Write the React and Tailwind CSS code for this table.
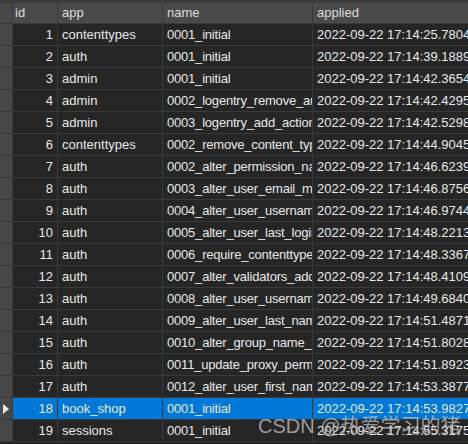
import React from "react";

const rows = [
  [1, "contenttypes", "0001_initial", "2022-09-22 17:14:25.780460"],
  [2, "auth", "0001_initial", "2022-09-22 17:14:39.188962"],
  [3, "admin", "0001_initial", "2022-09-22 17:14:42.365421"],
  [4, "admin", "0002_logentry_remove_auto_add", "2022-09-22 17:14:42.429510"],
  [5, "admin", "0003_logentry_add_action_flag_choices", "2022-09-22 17:14:42.529832"],
  [6, "contenttypes", "0002_remove_content_type_name", "2022-09-22 17:14:44.904512"],
  [7, "auth", "0002_alter_permission_name_max_length", "2022-09-22 17:14:46.623910"],
  [8, "auth", "0003_alter_user_email_max_length", "2022-09-22 17:14:46.875632"],
  [9, "auth", "0004_alter_user_username_opts", "2022-09-22 17:14:46.974411"],
  [10, "auth", "0005_alter_user_last_login_null", "2022-09-22 17:14:48.221309"],
  [11, "auth", "0006_require_contenttypes_0002", "2022-09-22 17:14:48.336721"],
  [12, "auth", "0007_alter_validators_add_error_messages", "2022-09-22 17:14:48.410987"],
  [13, "auth", "0008_alter_user_username_max_length", "2022-09-22 17:14:49.684022"],
  [14, "auth", "0009_alter_user_last_name_max_length", "2022-09-22 17:14:51.487133"],
  [15, "auth", "0010_alter_group_name_max_length", "2022-09-22 17:14:51.802854"],
  [16, "auth", "0011_update_proxy_permissions", "2022-09-22 17:14:51.892376"],
  [17, "auth", "0012_alter_user_first_name_max_length", "2022-09-22 17:14:53.387765"],
  [18, "book_shop", "0001_initial", "2022-09-22 17:14:53.982734"],
  [19, "sessions", "0001_initial", "2022-09-22 17:14:55.317598"],
];

const Row = ({ r }) => {
  const sel = r[0] === 18;
  const bg = sel ? "bg-[#0078d7]" : "bg-[#262626]";
  return (
    <div className="flex h-[22px] border-b border-[#3a3a3a]">
      <div className="w-[13px] shrink-0 bg-[#474747] border-r border-[#3a3a3a] flex items-center justify-center">
        {sel && (
          <svg width="8" height="12" viewBox="0 0 8 12">
            <path d="M1 1 L7 6 L1 11 Z" fill="#e6e6e6" />
          </svg>
        )}
      </div>
      <div className={`w-[45px] shrink-0 border-r border-[#3a3a3a] text-right pr-[4px] leading-[21px] ${bg}`}>
        {r[0]}
      </div>
      <div className={`w-[105px] shrink-0 border-r border-[#3a3a3a] pl-[4px] leading-[21px] overflow-hidden whitespace-nowrap ${bg}`}>
        {r[1]}
      </div>
      <div className={`w-[150px] shrink-0 border-r border-[#3a3a3a] pl-[4px] leading-[21px] overflow-hidden whitespace-nowrap tracking-[-0.2px] ${bg}`}>
        {r[2]}
      </div>
      <div className={`flex-1 pl-[4px] leading-[21px] overflow-hidden whitespace-nowrap ${bg}`}>
        {r[3]}
      </div>
    </div>
  );
};

export default function App() {
  return (
    <div
      className="relative w-[468px] h-[444px] overflow-hidden bg-[#262626] text-[13px] text-[#e8e8e8]"
      style={{ fontFamily: '"Liberation Sans", "Noto Sans CJK SC", sans-serif' }}
    >
      <div className="h-[3px] bg-[#3c3c3c]" />
      <div className="flex h-[21px] bg-[#4a4a4a] border-b border-[#3a3a3a] text-[#dcdcdc]">
        <div className="w-[13px] shrink-0 bg-[#474747] border-r border-[#3a3a3a]" />
        <div className="w-[45px] shrink-0 border-r border-[#3a3a3a] pl-[2px] leading-[20px]">id</div>
        <div className="w-[105px] shrink-0 border-r border-[#3a3a3a] pl-[4px] leading-[20px]">app</div>
        <div className="w-[150px] shrink-0 border-r border-[#3a3a3a] pl-[4px] leading-[20px]">name</div>
        <div className="flex-1 pl-[4px] leading-[20px]">applied</div>
      </div>
      {rows.map((r) => (
        <Row key={r[0]} r={r} />
      ))}
      <div className="absolute left-[258px] top-[411px] text-[20px] text-[#c4c4c4]/75 whitespace-nowrap pointer-events-none">
        CSDN @热爱学习的猪
      </div>
    </div>
  );
}
